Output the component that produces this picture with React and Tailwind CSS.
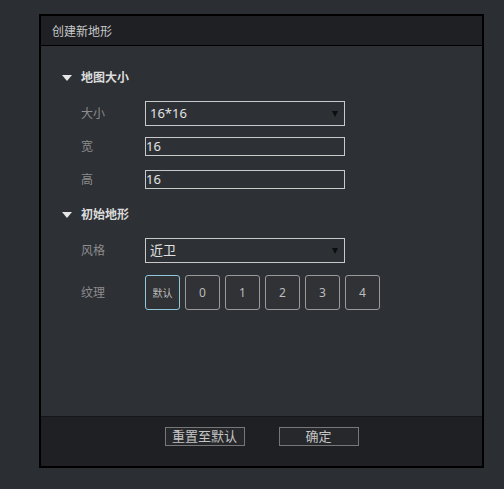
import React from 'react';

const font = { fontFamily: '"Noto Sans", "Noto Sans CJK SC", sans-serif' };

function Caret({ className }) {
  return (
    <svg className={className} width="10" height="6" viewBox="0 0 10 6">
      <polygon points="0,0 10,0 5,6" fill="currentColor" />
    </svg>
  );
}

function Section({ title, className }) {
  return (
    <div className={`flex items-center h-4 pl-[21px] ${className}`}>
      <Caret className="text-[#e6e6e6]" />
      <span className="ml-[9px] text-[12px] font-bold text-[#dcdcdc] leading-none">{title}</span>
    </div>
  );
}

function Row({ label, children, className }) {
  return (
    <div className={`flex items-center pl-10 ${className}`}>
      <span className="w-16 text-[12px] text-[#8c8c8c] leading-none">{label}</span>
      {children}
    </div>
  );
}

function Select({ value }) {
  return (
    <div className="w-[200px] h-[25px] border border-[#c9c9c9] flex items-center justify-between pl-1 pr-[6px]">
      <span className="text-[13px] text-[#e2e2e2] leading-none">{value}</span>
      <svg width="6" height="6" viewBox="0 0 6 6"><polygon points="0,0 6,0 3,6" fill="#0d0d0d" /></svg>
    </div>
  );
}

function Input({ value }) {
  return (
    <div className="w-[200px] h-[19px] border border-[#c9c9c9] flex items-center">
      <span className="text-[13px] text-[#e2e2e2] leading-none">{value}</span>
    </div>
  );
}

export default function App() {
  const tex = ['默认', '0', '1', '2', '3', '4'];
  return (
    <div className="w-[504px] h-[489px] bg-[#2b2e33] pt-[14px] pl-[39px]" style={font}>
      <div className="w-[445px] h-[454px] border-2 border-black flex flex-col bg-[#2d3035]">
        <div className="h-[30px] shrink-0 bg-[#1f2024] border-b border-black flex items-center pl-[11px] pt-[2px]">
          <span className="text-[12px] text-[#c8c8c8] leading-none">创建新地形</span>
        </div>

        <div className="flex-1 flex flex-col pt-6">
          <Section title="地图大小" />
          <Row label="大小" className="mt-[15px]">
            <Select value="16*16" />
          </Row>
          <Row label="宽" className="mt-[11px]">
            <Input value="16" />
          </Row>
          <Row label="高" className="mt-[14px]">
            <Input value="16" />
          </Row>

          <Section title="初始地形" className="mt-[18px]" />
          <Row label="风格" className="mt-[15px]">
            <Select value="近卫" />
          </Row>
          <Row label="纹理" className="mt-3">
            <div className="flex gap-[5px]">
              {tex.map((t, i) => (
                <div
                  key={t}
                  className={`w-[35px] h-[35px] rounded-[3px] border flex items-center justify-center bg-[#303236] text-[#bdbdbd] leading-none ${i === 0 ? 'border-[#8fc8dc] text-[10px]' : 'border-[#9a9a9a] text-[12px]'}`}
                >
                  {t}
                </div>
              ))}
            </div>
          </Row>
        </div>

        <div className="h-[50px] shrink-0 bg-[#1f2024] border-t border-[#151618] flex justify-center pt-[10px] gap-[34px]">
          <button className="w-20 h-[19px] border border-[#777] bg-[#26282c] text-[13px] text-[#c4c4c4] leading-none">重置至默认</button>
          <button className="w-20 h-[19px] border border-[#777] bg-[#26282c] text-[13px] text-[#c4c4c4] leading-none">确定</button>
        </div>
      </div>
    </div>
  );
}
